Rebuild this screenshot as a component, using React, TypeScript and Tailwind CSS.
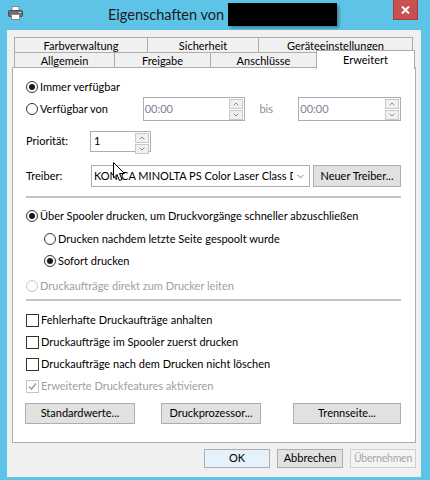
import { ChevronDown, ChevronUp } from 'lucide-react';

function Radio({ checked = false, disabled = false }: { checked?: boolean; disabled?: boolean }) {
  return (
    <span
      className={`flex h-[12px] w-[12px] shrink-0 items-center justify-center rounded-full border bg-white ${
        disabled ? 'border-[#c4c4c4]' : 'border-[#333333]'
      }`}
    >
      {checked && <span className="h-[6px] w-[6px] rounded-full bg-[#1a1a1a]" />}
    </span>
  );
}

function Check({ checked = false, disabled = false }: { checked?: boolean; disabled?: boolean }) {
  return (
    <span
      className={`flex h-[13px] w-[13px] shrink-0 items-center justify-center border bg-white ${
        disabled ? 'border-[#c4c4c4]' : 'border-[#333333]'
      }`}
    >
      {checked && (
        <svg width="9" height="9" viewBox="0 0 9 9">
          <path d="M1 4.5 L3.5 7 L8 1.5" fill="none" stroke="#a0a0a0" strokeWidth="1.6" />
        </svg>
      )}
    </span>
  );
}

function Spinner() {
  return (
    <div className="flex w-[15px] flex-col gap-px py-px pr-px">
      <div className="flex flex-1 items-center justify-center border border-[#c9c9c9] bg-[#f0f0f0]">
        <ChevronUp size={8} strokeWidth={2} className="text-[#555]" />
      </div>
      <div className="flex flex-1 items-center justify-center border border-[#c9c9c9] bg-[#f0f0f0]">
        <ChevronDown size={8} strokeWidth={2} className="text-[#555]" />
      </div>
    </div>
  );
}

function Btn({ label, className = '' }: { label: string; className?: string }) {
  return (
    <div
      className={`flex items-center justify-center whitespace-nowrap border border-[#adadad] bg-[#e1e1e1] text-black ${className}`}
    >
      {label}
    </div>
  );
}

function TimeBox() {
  return (
    <div className="flex h-[24px] w-[103px] border border-[#abadb3] bg-white">
      <span className="flex flex-1 items-center pl-[1px] text-[#7d8296]">00:00</span>
      <Spinner />
    </div>
  );
}

export default function App() {
  return (
    <div
      className="relative flex h-[480px] w-[430px] flex-col bg-[#5ec4e7] text-[11px] text-black"
      style={{ fontFamily: 'Lato, "Liberation Sans", sans-serif' }}
    >
      {/* Title bar */}
      <div className="flex h-[30px] shrink-0 items-start">
        <svg className="ml-[8px] mt-[6px]" width="15" height="14" viewBox="0 0 15 14">
          <rect x="4" y="0.5" width="7" height="4" fill="#fff" stroke="#888" />
          <rect x="0.5" y="4.5" width="14" height="6" rx="1" fill="#6b6f75" stroke="#4a4d52" />
          <rect x="3.5" y="8.5" width="8" height="5" fill="#fff" stroke="#888" />
          <rect x="11" y="6" width="2" height="1" fill="#bfe3f0" />
        </svg>
        <div className="flex flex-1 items-center pl-[85px] pt-[3px]">
          <span className="text-[14.5px] leading-[22px] text-[#1a1a1a]">Eigenschaften von</span>
          <span className="ml-[4px] h-[23px] w-[109px] bg-black shadow-[2px_2px_3px_rgba(0,0,0,0.35)]" />
        </div>
        <div className="mr-[12px] flex h-[20px] w-[25px] items-center justify-center border border-t-0 border-[#a33c3c] bg-[#c75050]">
          <svg width="9" height="8" viewBox="0 0 9 8">
            <path d="M1 0.5 L8 7.5 M8 0.5 L1 7.5" stroke="#fff" strokeWidth="2" />
          </svg>
        </div>
      </div>

      {/* Dialog body */}
      <div className="ml-[7px] mr-[9px] flex h-[447px] flex-col bg-[#f0f0f0] px-[5px] pt-[7px]">
        {/* Tabs */}
        <div className="ml-[2px] flex flex-col">
          <div className="flex h-[16px]">
            {[
              ['Farbverwaltung', 'w-[134px]'],
              ['Sicherheit', 'w-[112px]'],
              ['Geräteeinstellungen', 'w-[155px]'],
            ].map(([t, w]) => (
              <div
                key={t}
                className={`${w} -mr-px flex items-center justify-center border border-[#acacac] bg-[#f0f0f0] leading-none`}
              >
                {t}
              </div>
            ))}
          </div>
          <div className="-mt-px flex h-[16px] items-start">
            {[
              ['Allgemein', 'w-[101px]'],
              ['Freigabe', 'w-[97px]'],
              ['Anschlüsse', 'w-[107px]'],
            ].map(([t, w]) => (
              <div
                key={t}
                className={`${w} -mr-px flex h-[16px] items-center justify-center border border-[#acacac] bg-[#f0f0f0] leading-none`}
              >
                {t}
              </div>
            ))}
            <div className="relative z-10 -mt-[2px] flex h-[19px] w-[99px] items-start justify-center border border-b-0 border-[#acacac] bg-white pt-[3px] leading-none">
              Erweitert
            </div>
          </div>
        </div>

        {/* Panel */}
        <div className="-mt-px flex h-[376px] flex-col border border-[#acacac] bg-white pl-[13px] pr-[14px] pt-[9px]">
          <div className="flex h-[20px] items-center gap-[2px]">
            <Radio checked />
            <span>Immer verfügbar</span>
          </div>
          <div className="flex h-[24px] items-center">
            <Radio />
            <span className="ml-[2px] w-[103px]">Verfügbar von</span>
            <TimeBox />
            <span className="ml-[14px] w-[39px] text-[#8e8e8e]">bis</span>
            <TimeBox />
          </div>
          <div className="mt-[10px] flex h-[21px] items-center">
            <span className="w-[64px]">Priorität:</span>
            <div className="flex h-[21px] w-[61px] border border-[#abadb3] bg-white">
              <span className="flex flex-1 items-center pl-[3px]">1</span>
              <Spinner />
            </div>
          </div>
          <div className="mt-[13px] flex h-[22px] items-center">
            <span className="w-[65px]">Treiber:</span>
            <div className="flex h-[22px] w-[219px] items-center border border-[#abadb3] bg-white pl-[2px] pr-[3px]">
              <span className="flex-1 overflow-hidden whitespace-nowrap">KONICA MINOLTA PS Color Laser Class D</span>
              <ChevronDown size={11} strokeWidth={1.5} className="ml-[2px] shrink-0 text-[#444]" />
            </div>
            <Btn label="Neuer Treiber..." className="ml-[3px] h-[22px] w-[88px]" />
          </div>
          <div className="mt-[9px] h-[2px] bg-[#c4c4c4]" />
          <div className="mt-[8px] flex h-[20px] items-center gap-[2px]">
            <Radio checked />
            <span className="whitespace-nowrap">Über Spooler drucken, um Druckvorgänge schneller abzuschließen</span>
          </div>
          <div className="mt-[3px] flex h-[20px] items-center gap-[2px] pl-[18px]">
            <Radio />
            <span>Drucken nachdem letzte Seite gespoolt wurde</span>
          </div>
          <div className="mt-[2px] flex h-[20px] items-center gap-[2px] pl-[18px]">
            <Radio checked />
            <span>Sofort drucken</span>
          </div>
          <div className="mt-[5px] flex h-[20px] items-center gap-[2px] text-[#a0a0a0]">
            <Radio disabled />
            <span>Druckaufträge direkt zum Drucker leiten</span>
          </div>
          <div className="mt-[3px] h-[2px] bg-[#c4c4c4]" />
          <div className="mt-[9px] flex h-[20px] items-center gap-[2px]">
            <Check />
            <span>Fehlerhafte Druckaufträge anhalten</span>
          </div>
          <div className="mt-[2px] flex h-[20px] items-center gap-[2px]">
            <Check />
            <span>Druckaufträge im Spooler zuerst drucken</span>
          </div>
          <div className="mt-[2px] flex h-[20px] items-center gap-[2px]">
            <Check />
            <span>Druckaufträge nach dem Drucken nicht löschen</span>
          </div>
          <div className="mt-[2px] flex h-[20px] items-center gap-[2px] text-[#a0a0a0]">
            <Check checked disabled />
            <span>Erweiterte Druckfeatures aktivieren</span>
          </div>
          <div className="mt-[7px] flex h-[21px] items-center">
            <Btn label="Standardwerte..." className="-ml-px h-[21px] w-[110px]" />
            <Btn label="Druckprozessor..." className="ml-[26px] h-[21px] w-[100px]" />
            <Btn label="Trennseite..." className="ml-[32px] h-[21px] w-[108px]" />
          </div>
        </div>

        {/* Bottom buttons */}
        <div className="mt-[6px] flex h-[19px] justify-end gap-[7px]">
          <Btn label="OK" className="w-[66px] border-[#5b9bd5] !bg-[#e5f1fb]" />
          <Btn label="Abbrechen" className="w-[66px] border-[#707070]" />
          <div className="flex w-[66px] items-center justify-center whitespace-nowrap border border-[#d0d0d0] bg-[#f4f4f4] text-[10.5px] tracking-[-0.2px] text-[#a6a6a6]">
            Übernehmen
          </div>
        </div>
      </div>

      {/* Mouse pointer */}
      <svg className="absolute left-[113px] top-[162px]" width="13" height="20" viewBox="0 0 13 20">
        <path d="M0.5 0.5 L0.5 16 L4 12.5 L6.5 18.5 L9 17.5 L6.5 11.5 L11.5 11.5 Z" fill="#fff" stroke="#000" strokeWidth="1" />
      </svg>
    </div>
  );
}
